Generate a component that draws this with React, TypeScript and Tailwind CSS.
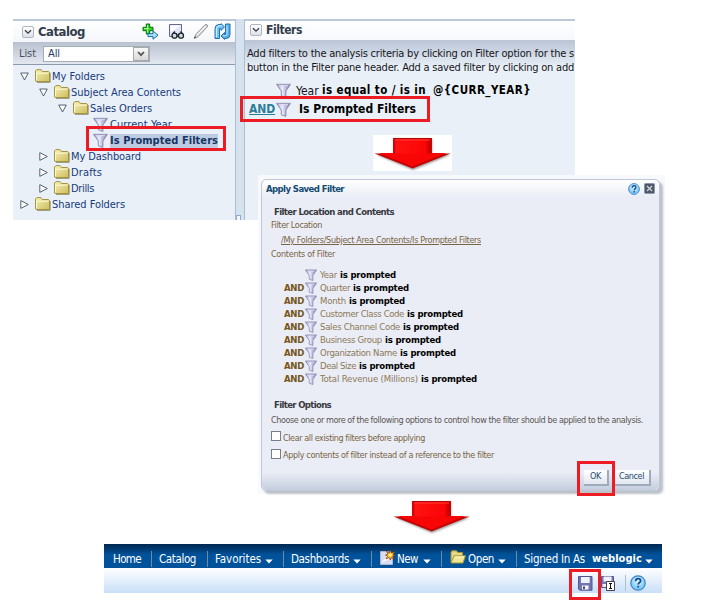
import React, { useLayoutEffect, useRef, useState } from "react";

/** One line of text whose tracking is adjusted so that it fills `w` pixels. */
function T({ w, c = "", children }: { w: number; c?: string; children: string }) {
  const ref = useRef<HTMLSpanElement>(null);
  const [ls, setLs] = useState(0);
  useLayoutEffect(() => {
    const el = ref.current;
    if (!el) return;
    el.style.letterSpacing = "0px";
    const natural = el.getBoundingClientRect().width;
    const next = (w - natural) / children.length;
    el.style.letterSpacing = next + "px";
    setLs(next);
  }, [w, children]);
  return (
    <span ref={ref} className={"shrink-0 whitespace-pre " + c} style={{ letterSpacing: ls }}>
      {children}
    </span>
  );
}

function Folder() {
  return (
    <svg width="16" height="14" viewBox="0 0 16 14" className="shrink-0">
      <defs>
        <linearGradient id="fold" x1="0" y1="0" x2="1" y2="1">
          <stop offset="0" stopColor="#f6f1b8" />
          <stop offset="1" stopColor="#cdbd5c" />
        </linearGradient>
      </defs>
      <path d="M2 13.4H15.2V4" fill="none" stroke="#8f8b70" strokeWidth=".9" />
      <path d="M.5 12V2L1.8.6H6L7.4 2.5H13.6L14.5 3.4V12.5H1Z" fill="url(#fold)" stroke="#a3943f" />
      <path d="M1.5 11.5V4.2H13.5" fill="none" stroke="#fffbd2" />
    </svg>
  );
}

function Funnel({ size = 15 }: { size?: number }) {
  return (
    <svg width={size} height={size} viewBox="0 0 15 15" className="shrink-0">
      <defs>
        <linearGradient id="fun" x1="0" x2="1">
          <stop offset="0" stopColor="#8f8cc4" />
          <stop offset=".4" stopColor="#efeffc" />
          <stop offset=".6" stopColor="#c5c3e2" />
          <stop offset="1" stopColor="#7f7bb2" />
        </linearGradient>
      </defs>
      <path d="M.6 1.5H14.4L9.9 8V14.4L5.3 12.8V8Z" fill="url(#fun)" stroke="#8482ab" strokeWidth=".9" />
      <path d="M.5 1.3H14.5" stroke="#a3a2c0" />
      <path d="M3 2.7H12" stroke="#dcdcf2" />
    </svg>
  );
}

function Tri({ open }: { open?: boolean }) {
  return (
    <svg width="9" height="9" viewBox="0 0 9 9" className="shrink-0">
      <path d={open ? "M.7 1H8.3L4.5 8Z" : "M.8 .6V8.4L8.3 4.5Z"} fill="#fbfcff" stroke="#4c545f" strokeWidth=".9" />
    </svg>
  );
}

function Collapse() {
  return (
    <span className="flex h-3 w-3 shrink-0 items-center justify-center rounded-[2px] border border-[#b0b5be] bg-gradient-to-b from-white to-[#dde1e8]">
      <svg width="8" height="6" viewBox="0 0 8 6">
        <path d="M1 1.2 4 4.2 7 1.2" fill="none" stroke="#333b46" strokeWidth="1.3" />
      </svg>
    </span>
  );
}

function BigArrow({ id }: { id: string }) {
  return (
    <svg width="79" height="36" viewBox="0 0 79 36" className="block">
      <defs>
        <linearGradient id={id} x1="0" x2="1">
          <stop offset="0" stopColor="#c40000" />
          <stop offset=".08" stopColor="#ff1212" />
          <stop offset=".84" stopColor="#fb0505" />
          <stop offset="1" stopColor="#b00000" />
        </linearGradient>
        <filter id={id + "s"} x="-10%" y="-10%" width="120%" height="130%">
          <feGaussianBlur stdDeviation=".9" />
        </filter>
      </defs>
      <path d="M21 4H59V19.5H78L40 35 3 19.5H21Z" fill="#444" opacity=".55" filter={"url(#" + id + "s)"} />
      <path d="M1.5 18.5H77.5L39.5 33.5Z" fill="#c20505" />
      <path d="M20 3H59V18H73L39.5 31.5 6 18H20Z" fill="#f80505" />
      <path d="M20.5 3H58.5V18.5H20.5Z" fill={"url(#" + id + ")"} />
      <path d="M20.5 3.5H58.5" stroke="#b00808" />
      <path d="M22 5H57" stroke="#ff3a30" />
    </svg>
  );
}

function Help({ size }: { size: number }) {
  return (
    <svg width={size} height={size} viewBox="0 0 16 16" className="shrink-0">
      <defs>
        <radialGradient id="hlp" cx=".5" cy=".35">
          <stop offset="0" stopColor="#effbff" />
          <stop offset="1" stopColor="#7fcaf6" />
        </radialGradient>
      </defs>
      <circle cx="8" cy="8" r="7.2" fill="url(#hlp)" stroke="#3f83c4" strokeWidth="1.2" />
      <path d="M5.7 6.2C5.7 4.4 6.8 3.7 8.1 3.7 9.6 3.7 10.6 4.6 10.6 5.9 10.6 7.6 8.2 7.5 8.2 9.5M8.2 10.8V12.6" fill="none" stroke="#0c4f9b" strokeWidth="1.8" />
    </svg>
  );
}

function TreeRow({ indent, open, text, w }: { indent: string; open?: boolean; text: string; w: number }) {
  return (
    <div className={"flex h-4 items-center " + indent}>
      <Tri open={open} />
      <span className="w-[6px] shrink-0" />
      <Folder />
      <span className="w-px shrink-0" />
      <T w={w} c="mt-[2px]">{text}</T>
    </div>
  );
}

function CatalogPanel() {
  return (
    <div className="flex h-[201px] w-[223px] flex-col border-r border-t-2 border-r-[#aebdd0] border-t-[#bcc8d8] bg-[#e9f0f8] text-[11px] text-[#173a7c]">
      <div className="flex h-[21px] shrink-0 items-center bg-gradient-to-b from-white to-[#f4f6fb] pl-[9px]">
        <Collapse />
        <span className="w-[4px]" />
        <T w={47} c="text-[13px] font-bold text-[#333d4b]">Catalog</T>
        <span className="w-[57px] shrink-0" />
        <svg width="17" height="17" viewBox="0 0 17 17" className="shrink-0">
          <path d="M4.3 1H7.7V4.3H11V7.7H7.7V11H4.3V7.7H1V4.3H4.3Z" fill="#36d32f" stroke="#08680d" />
          <path d="M5.5 2V9.5M2 5.5H7" stroke="#9cff85" />
          <path d="M6 10.7H11V8L16 12.2 11 16.2V13.6H6Z" fill="#a8e7ff" stroke="#1768a8" />
        </svg>
        <svg width="17" height="17" viewBox="0 0 17 17" className="ml-[9px] shrink-0">
          <path d="M1.5 1.5H13.5V13.5H1.5Z" fill="#e3e6fa" stroke="#66668e" />
          <path d="M2.5 2.5H12.5L2.5 9Z" fill="#fff" />
          <circle cx="6.5" cy="12.7" r="2.5" fill="#cfdde2" stroke="#1d252b" strokeWidth="1.3" />
          <circle cx="13" cy="12.7" r="2.5" fill="#cfdde2" stroke="#1d252b" strokeWidth="1.3" />
          <path d="M5 10.5 7 8.5M14.3 10.5 12.5 8.5M8.8 12H11" stroke="#1d252b" strokeWidth="1.2" />
        </svg>
        <svg width="16" height="17" viewBox="0 0 16 17" className="ml-[8px] shrink-0">
          <path d="M1.5 15 2.7 11.6 11.8 2.1Q13 .9 14.1 1.9 15.1 3 14 4.2L5 13.7Z" fill="#dedede" stroke="#8e8e8e" />
          <path d="M4 12 12.8 3" stroke="#fff" />
          <path d="M1.2 15.3 2.6 13.8" stroke="#444" strokeWidth="1.2" />
        </svg>
        <svg width="17" height="17" viewBox="0 0 17 17" className="ml-[5px] shrink-0">
          <path d="M1 15.5V5.5Q1 1.5 5 1.5H7V.6L10.5 4 7 7.4V5.6H5.5V15.5Z" fill="#6fc4f3" stroke="#1761ad" strokeWidth=".9" />
          <path d="M2.4 14V6Q2.4 3 5 2.8H7.5" fill="none" stroke="#d5f4ff" />
          <path d="M16 1V11.5Q16 15.5 12 15.5H10.5V16.4L7 13 10.5 9.6V11.4H11.5V1Z" fill="#57b0ea" stroke="#1761ad" strokeWidth=".9" />
          <path d="M13 2.3V11Q13 12.7 10.8 12.8H9" fill="none" stroke="#b9ebff" />
        </svg>
      </div>
      <div className="flex h-[23px] shrink-0 items-center border-b border-[#8b99ad] bg-gradient-to-b from-[#b9c1d0] to-[#e3e8f0] pl-[6px] text-[#4b5058]">
        <T w={17} c="mt-[2px]">List</T>
        <div className="ml-[7px] mt-px flex h-4 w-[107px] items-center border border-[#a5acb8] bg-white pl-1 text-[#243b68]">
          <T w={12} c="mt-px">All</T>
          <span className="ml-auto flex h-[14px] w-4 items-center justify-center border border-[#a9a9a9] bg-gradient-to-b from-[#f9f9f9] to-[#d8d8d8]">
            <svg width="8" height="6" viewBox="0 0 8 6"><path d="M1 1 4 4.2 7 1" fill="none" stroke="#555" strokeWidth="1.8" /></svg>
          </span>
        </div>
      </div>
      <div className="flex flex-col pt-[3px]">
        <TreeRow indent="pl-[7px]" open text="My Folders" w={53} />
        <TreeRow indent="pl-[26px]" open text="Subject Area Contents" w={110} />
        <TreeRow indent="pl-[45px]" open text="Sales Orders" w={62} />
        <div className="flex h-4 items-center pl-[80px]">
          <Funnel />
          <span className="w-[2px]" />
          <T w={62} c="mt-[2px]">Current Year</T>
        </div>
        <div className="flex h-4 items-center pl-[80px]">
          <Funnel />
          <span className="w-[2px]" />
          <T w={108} c="mt-[2px] bg-[#bccbe1] font-bold leading-[14px] text-[#163564]">Is Prompted Filters</T>
        </div>
        <TreeRow indent="pl-[26px]" text="My Dashboard" w={70} />
        <TreeRow indent="pl-[26px]" text="Drafts" w={31} />
        <TreeRow indent="pl-[26px]" text="Drills" w={23} />
        <TreeRow indent="pl-[7px]" text="Shared Folders" w={73} />
      </div>
    </div>
  );
}

function FiltersPanel() {
  return (
    <div className="flex h-[201px] w-[331px] flex-col border-l border-t-2 border-l-[#aebdd0] border-t-[#bcc8d8] bg-[#e9f0f8] text-[11px] text-[#15161a]">
      <div className="flex h-[19px] shrink-0 items-center bg-gradient-to-b from-white to-[#f6f8fc] pb-px pl-[5px]">
        <Collapse />
        <span className="w-[4px]" />
        <T w={36} c="text-[12px] font-bold text-[#333d4b]">Filters</T>
      </div>
      <div className="flex h-[37px] shrink-0 flex-col items-start bg-gradient-to-b from-[#bac4d5] to-[#e9f0f8] to-75% pl-[2px] pt-[7px] leading-[14px]">
        <T w={327}>Add filters to the analysis criteria by clicking on Filter option for the s</T>
        <T w={327}>button in the Filter pane header. Add a saved filter by clicking on add</T>
      </div>
      <div className="flex h-[20px] items-center pl-[31px] pt-[7px] text-[12px]">
        <Funnel />
        <span className="w-[5px] shrink-0" />
        <T w={26}>{"Year "}</T>
        <T w={104} c="text-[11.5px] font-bold text-black">is equal to / is in</T>
        <T w={98} c="ml-[7px] text-[11.5px] font-bold text-black">@&#123;CURR_YEAR&#125;</T>
      </div>
      <div className="mt-[4px] flex h-[16px] items-center pl-[4px] text-[12px]">
        <T w={26} c="font-bold text-[#2a7d98] underline">AND</T>
        <span className="w-px" />
        <Funnel />
        <T w={117} c="ml-[8px] font-bold text-black">Is Prompted Filters</T>
      </div>
    </div>
  );
}

const prompted: [string, number][] = [
  ["Year", 17],
  ["Quarter", 30],
  ["Month", 26],
  ["Customer Class Code", 84],
  ["Sales Channel Code", 80],
  ["Business Group", 62],
  ["Organization Name", 77],
  ["Deal Size", 36],
  ["Total Revenue (Millions)", 98],
];

function Dialog() {
  return (
    <div className="absolute left-[258px] top-[175px] h-[319px] w-[407px] bg-[#f8f9fd] pl-[3px] pt-1 text-[9px] text-[#796443]">
      <div className="flex h-[312px] w-[399px] flex-col rounded-[5px] border border-[#bfc8d8] bg-[#eaedf6] shadow-[3px_3px_2px_#bdc2ca]">
        <div className="flex h-[17px] shrink-0 items-center rounded-t-[5px] bg-gradient-to-b from-white to-[#eaedf6] pl-[4px] pr-[4px] pt-[2px]">
          <T w={78} c="text-[9.5px] font-bold text-[#154a72]">Apply Saved Filter</T>
          <span className="-mt-[2px] ml-auto flex items-center gap-[4px]">
            <Help size={12} />
            <svg width="11" height="11" viewBox="0 0 11 11">
              <rect x=".5" y=".5" width="10" height="10" rx="1" fill="#4c586c" stroke="#8d96a6" />
              <path d="M3 3 8 8M8 3 3 8" stroke="#d8d8d3" strokeWidth="1.3" />
            </svg>
          </span>
        </div>
        <div className="mt-[8px] flex h-[14px] items-center pl-[12px]"><T w={120} c="text-[9.5px] font-bold text-[#38393e]">Filter Location and Contents</T></div>
        <div className="flex h-[14px] items-center pl-[9px]"><T w={51}>Filter Location</T></div>
        <div className="mt-px flex h-[14px] items-center pl-[19px]"><T w={200} c="underline">/My Folders/Subject Area Contents/Is Prompted Filters</T></div>
        <div className="flex h-[15px] items-center pl-[9px]"><T w={64}>Contents of Filter</T></div>
        <div className="mt-[7px] flex flex-col">
          {prompted.map(([name, w], i) => (
            <div key={name} className="flex h-[13px] items-center pl-[22px] text-[9.5px]">
              <span className="flex w-[21px] shrink-0">{i > 0 && <T w={20} c="font-bold text-[#755620]">AND</T>}</span>
              <Funnel size={12} />
              <span className="w-[3px]" />
              <T w={w} c="text-[#8c7857]">{name}</T>
              <T w={56} c="ml-[3px] font-bold text-black">is prompted</T>
            </div>
          ))}
        </div>
        <div className="mt-[12px] flex h-[14px] items-center pl-[12px]"><T w={57} c="text-[9.5px] font-bold text-[#38393e]">Filter Options</T></div>
        <div className="mt-[2px] flex h-[15px] items-center pl-[9px] text-[#5b5553]"><T w={372}>Choose one or more of the following options to control how the filter should be applied to the analysis.</T></div>
        <div className="-mt-px flex h-[17px] items-center pl-[9px]">
          <span className="h-[10px] w-[10px] border border-[#777e88] bg-white" />
          <T w={142} c="ml-[2px] mt-[5px]">Clear all existing filters before applying</T>
        </div>
        <div className="mt-px flex h-[17px] items-center pl-[9px]">
          <span className="h-[10px] w-[10px] border border-[#777e88] bg-white" />
          <T w={211} c="ml-[2px] mt-[4px]">Apply contents of filter instead of a reference to the filter</T>
        </div>
        <div className="mt-auto flex h-[28px] items-start justify-end gap-[5px] rounded-b-[5px] bg-gradient-to-b from-[#eaedf6] from-35% to-[#c5cddd] pr-[8px] pt-[7px] text-[#294c70]">
          <div className="flex h-4 w-[25px] items-center justify-center border-b-2 border-r-2 border-[#9eabbc] bg-gradient-to-b from-white to-[#e2e7ef]"><T w={11}>OK</T></div>
          <div className="flex h-4 w-[37px] items-center justify-center border-b-2 border-r-2 border-[#9eabbc] bg-gradient-to-b from-white to-[#e2e7ef]"><T w={25}>Cancel</T></div>
        </div>
      </div>
    </div>
  );
}

function Caret({ c }: { c: string }) {
  return (
    <svg width="8" height="5" viewBox="0 0 8 5" className={"mt-[4px] shrink-0 " + c}>
      <path d="M.3.5H7.7L4 4.5Z" fill="#fff" />
    </svg>
  );
}

function Sep({ c }: { c: string }) {
  return <span className={"h-4 w-px shrink-0 bg-[#6b8ca4] " + c} />;
}

function GlobalBar() {
  return (
    <div className="ml-[104px] flex w-[558px] flex-col">
      <div className="flex h-6 items-center bg-gradient-to-b from-[#00274f] to-[#00529a] to-45% pl-[9px] pt-[6px] text-[11.5px] text-white">
        <T w={28} c="mt-px">Home</T>
        <Sep c="ml-[10px]" />
        <T w={37} c="ml-[7px] mt-px">Catalog</T>
        <Sep c="ml-[11px]" />
        <T w={46} c="ml-[7px] mt-px">Favorites</T>
        <Caret c="ml-[4px]" />
        <Sep c="ml-[10px]" />
        <T w={58} c="ml-[7px] mt-px">Dashboards</T>
        <Caret c="ml-[4px]" />
        <Sep c="ml-[10px]" />
        <svg width="15" height="15" viewBox="0 0 15 15" className="-mt-[4px] ml-[8px] shrink-0">
          <path d="M.5 1.5H9L12.5 5.5V14.5H.5Z" fill="#d5def2" stroke="#b5b3cc" />
          <path d="M1 13 10 3V9Z" fill="#fff" opacity=".8" />
          <path d="M10.5 0 11.6 3 14.8 1.4 13 4.5 15 5.5 12.5 6.3 14 9 11 7.6 10.3 10 9.2 7.5 6 9 7.6 6 5.5 5 8 4 6.4 1.2 9.5 3Z" fill="#ffc32b" stroke="#8b3008" strokeWidth=".7" />
          <circle cx="10.4" cy="5" r="1.4" fill="#fff7a2" />
        </svg>
        <T w={21} c="ml-[2px] mt-px">New</T>
        <Caret c="ml-[5px]" />
        <Sep c="ml-[10px]" />
        <svg width="16" height="14" viewBox="0 0 16 14" className="-mt-[5px] ml-[8px] shrink-0">
          <path d="M1 12.5V2L2 .8H6.5L7.8 2.5H12.5V6" fill="#e4d887" stroke="#a19132" />
          <path d="M1 13 4 5.8H15.5L13 13Z" fill="#efe595" stroke="#a79632" />
          <path d="M5 7H14" stroke="#fffccf" />
        </svg>
        <T w={26} c="ml-[2px] mt-px">Open</T>
        <Caret c="ml-[4px]" />
        <Sep c="ml-[10px]" />
        <T w={61} c="ml-[7px] mt-px">Signed In As</T>
        <T w={50} c="ml-[7px] mt-px text-[11px] font-bold">weblogic</T>
        <Caret c="ml-[3px]" />
      </div>
      <div className="flex h-[25px] items-center bg-gradient-to-b from-white to-[#c9dff8] pl-[474px] pt-[5px]">
        <Disk />
        <span className="w-[8px] shrink-0" />
        <svg width="15" height="16" viewBox="0 0 15 16" className="shrink-0">
          <path d="M.5 1.5H12.5V12.5H.5Z" fill="#7979b5" stroke="#55558c" />
          <path d="M2.5 1.5H10.5V6.5H2.5Z" fill="#eef1fa" />
          <path d="M1.5 9H5V12H1.5Z" fill="#f0f0f8" />
          <path d="M5.5 6.5H13.5V15.5H5.5Z" fill="#fff" stroke="#444" />
          <path d="M8 8.5H11M9.5 8.5V13.5M8 13.5H11" stroke="#111" />
        </svg>
        <span className="ml-[9px] h-4 w-px shrink-0 bg-[#aebfce]" />
        <span className="w-[4px] shrink-0" />
        <Help size={16} />
      </div>
    </div>
  );
}

function Disk() {
  return (
    <svg width="15" height="15" viewBox="0 0 15 15" className="shrink-0">
      <path d="M.5.5H14V14.2H1.7L.5 13Z" fill="#7474b1" stroke="#55558d" />
      <path d="M3 1H11.7V7H3Z" fill="#edf1fb" />
      <path d="M4 9.5H10.5V13.5H4Z" fill="#f5f5fb" />
      <path d="M5 10.5H7V13H5Z" fill="#444478" />
    </svg>
  );
}

export default function App() {
  return (
    <div className="relative h-[606px] w-[704px] overflow-hidden bg-white pt-[19px] font-['DejaVu_Sans_Condensed','DejaVu_Sans',sans-serif] [font-stretch:condensed]">
      <div className="flex h-[201px]">
        <div className="ml-[13px] flex h-[201px] w-[562px] bg-[#d5e2f0]">
          <CatalogPanel />
          <div className="flex w-2 flex-col justify-end"><span className="h-[5px] w-[5px] border border-b-0 border-[#8eabd0] bg-[#f5f9ff]" /></div>
          <FiltersPanel />
        </div>
      </div>
      <div className="mt-[278px] h-[46px] pl-[392px]"><BigArrow id="lower" /></div>
      <GlobalBar />
      <div className="absolute left-[373px] top-[135px] bg-white"><BigArrow id="upper" /></div>
      <Dialog />
      <div className="absolute left-[86px] top-[126px] h-[25px] w-[140px] border-[3px] border-[#ed1c24]" />
      <div className="absolute left-[240px] top-[96px] h-[26px] w-[190px] border-[3px] border-[#ed1c24]" />
      <div className="absolute left-[577px] top-[461px] h-[35px] w-[38px] border-[3px] border-[#ed1c24]" />
      <div className="absolute left-[569px] top-[569px] h-[31px] w-[32px] border-[3px] border-[#ed1c24]" />
    </div>
  );
}
